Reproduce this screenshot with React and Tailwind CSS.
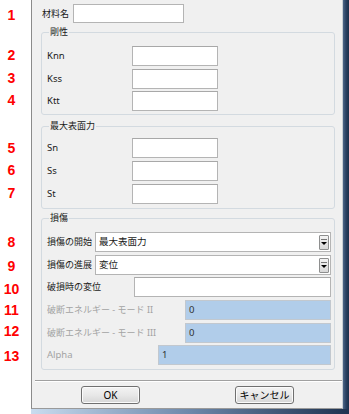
import React from "react";

const nums = [
  ["1", 7], ["2", 47], ["3", 70], ["4", 92], ["5", 140], ["6", 162], ["7", 185],
  ["8", 234], ["9", 258], ["10", 281], ["11", 302], ["12", 323], ["13", 348],
];

function TextBox({ className = "", children }) {
  return (
    <div className={"h-[20px] bg-white border border-[#b4b4b4] border-t-[#a8a8a8] flex items-center pl-[3px] " + className}>
      {children}
    </div>
  );
}

function BlueBox({ className = "", children }) {
  return (
    <div className={"h-[20px] bg-[#b1cdea] border border-[#c2c8cf] flex items-center pl-[3px] text-[#303030] " + className}>
      {children}
    </div>
  );
}

function Select({ value }) {
  return (
    <div className="h-[20px] w-[236px] bg-white border border-[#b4b4b4] flex items-center pl-[3px] pr-[1px]">
      <span className="flex-1 text-[9.5px]">{value}</span>
      <div className="w-[10px] h-[15px] border border-[#8e8f8f] rounded-[1px] bg-gradient-to-b from-[#f4f4f4] to-[#d8d8d8] flex items-center justify-center">
        <svg width="6" height="7" viewBox="0 0 6 7">
          <rect x="0" y="0" width="6" height="1" fill="#777" />
          <path d="M0 3 L6 3 L3 6 Z" fill="#000" />
        </svg>
      </div>
    </div>
  );
}

function Group({ title, className = "", children }) {
  return (
    <div className={"relative ml-[9px] w-[294px] border border-[#d3dae0] rounded-[3px] " + className}>
      <span className="absolute left-[7px] top-[-7px] px-[1px] bg-[#f0f0f0] leading-[12px]">{title}</span>
      {children}
    </div>
  );
}

function Btn({ children }) {
  return (
    <div className="w-[59px] h-[18px] border border-[#707070] rounded-[3px] bg-gradient-to-b from-[#f3f3f3] via-[#e8e8e8] to-[#d6d6d6] flex items-center justify-center text-[10px] text-black shadow-[inset_0_0_0_1px_#fbfbfb]">
      {children}
    </div>
  );
}

export default function App() {
  return (
    <div
      className="w-[349px] h-[414px] bg-white flex overflow-hidden text-[9.5px] text-[#1a1a1a]"
      style={{ fontFamily: '"Noto Sans", "Noto Sans CJK JP", sans-serif' }}
    >
      <div className="w-[31px] shrink-0 relative" style={{ fontFamily: '"Liberation Sans", sans-serif' }}>
        {nums.map(([n, t]) => (
          <div
            key={n}
            className="absolute left-0 w-[23px] text-center text-[14px] leading-[16px] font-bold text-[#ff0000]"
            style={{ top: t }}
          >
            {n}
          </div>
        ))}
      </div>
      <div className="flex-1 flex flex-col">
        <div className="flex-1 flex">
          <div className="w-[312px] flex flex-col bg-[#f0f0f0] border-l border-r border-b border-l-[#8b8b8b] border-r-[#c9ced4] border-b-[#9a9a9a]">
            {/* row 1 */}
            <div className="mt-[4px] h-[19px] flex items-center pl-[10px]">
              <span className="w-[31px] text-[9px]">材料名</span>
              <div className="w-[111px] h-[19px] bg-white border border-[#b4b4b4]" />
            </div>

            <Group title="剛性" className="mt-[9px] pt-[13px] pb-[3px] text-[9px]">
              <div className="flex flex-col pl-[5px] text-[9.5px]">
                <div className="flex items-center h-[20px]">
                  <span className="w-[85px]">Knn</span>
                  <TextBox className="w-[86px]" />
                </div>
                <div className="flex items-center h-[20px] mt-[3px]">
                  <span className="w-[85px]">Kss</span>
                  <TextBox className="w-[86px]" />
                </div>
                <div className="flex items-center h-[20px] mt-[2px]">
                  <span className="w-[85px]">Ktt</span>
                  <TextBox className="w-[86px]" />
                </div>
              </div>
            </Group>

            <Group title="最大表面力" className="mt-[11px] pt-[11px] pb-[4px] text-[9px]">
              <div className="flex flex-col pl-[5px] text-[9.5px]">
                <div className="flex items-center h-[20px]">
                  <span className="w-[85px]">Sn</span>
                  <TextBox className="w-[86px]" />
                </div>
                <div className="flex items-center h-[20px] mt-[3px]">
                  <span className="w-[85px]">Ss</span>
                  <TextBox className="w-[86px]" />
                </div>
                <div className="flex items-center h-[20px] mt-[3px]">
                  <span className="w-[85px]">St</span>
                  <TextBox className="w-[86px]" />
                </div>
              </div>
            </Group>

            <Group title="損傷" className="mt-[9px] pt-[13px] pb-[4px] text-[9px]">
              <div className="flex flex-col pl-[5px] pr-[3px]">
                <div className="flex items-center justify-between h-[20px]">
                  <span>損傷の開始</span>
                  <Select value="最大表面力" />
                </div>
                <div className="flex items-center justify-between h-[20px] mt-[3px]">
                  <span>損傷の進展</span>
                  <Select value="変位" />
                </div>
                <div className="flex items-center justify-between h-[20px] mt-[2px]">
                  <span>破損時の変位</span>
                  <TextBox className="w-[197px]" />
                </div>
                <div className="flex items-center justify-between h-[20px] mt-[3px] text-[#a3a3a3]">
                  <span>破断エネルギー - モード II</span>
                  <BlueBox className="w-[146px] text-[9.5px]">0</BlueBox>
                </div>
                <div className="flex items-center justify-between h-[20px] mt-[3px] text-[#a3a3a3]">
                  <span>破断エネルギー - モード III</span>
                  <BlueBox className="w-[146px] text-[9.5px]">0</BlueBox>
                </div>
                <div className="flex items-center justify-between h-[20px] mt-[2px] text-[#a3a3a3]">
                  <span className="text-[9.5px]">Alpha</span>
                  <BlueBox className="w-[173px] text-[9.5px]">1</BlueBox>
                </div>
              </div>
            </Group>

            <div className="mt-[10px] ml-[3px] h-[1px] bg-[#a0a0a0]" />
            <div className="ml-[3px] h-[1px] bg-white" />
            <div className="mt-[4px] flex pl-[49px] gap-[95px]">
              <Btn>OK</Btn>
              <Btn>キャンセル</Btn>
            </div>
          </div>
          <div className="w-[6px] bg-gradient-to-r from-[#4d6688] via-[#2a4162] to-[#1c2f4a]" />
        </div>
        <div className="h-[5px] bg-gradient-to-r from-[#c9dcef] via-[#6d88aa] to-[#1f3350]" />
      </div>
    </div>
  );
}
